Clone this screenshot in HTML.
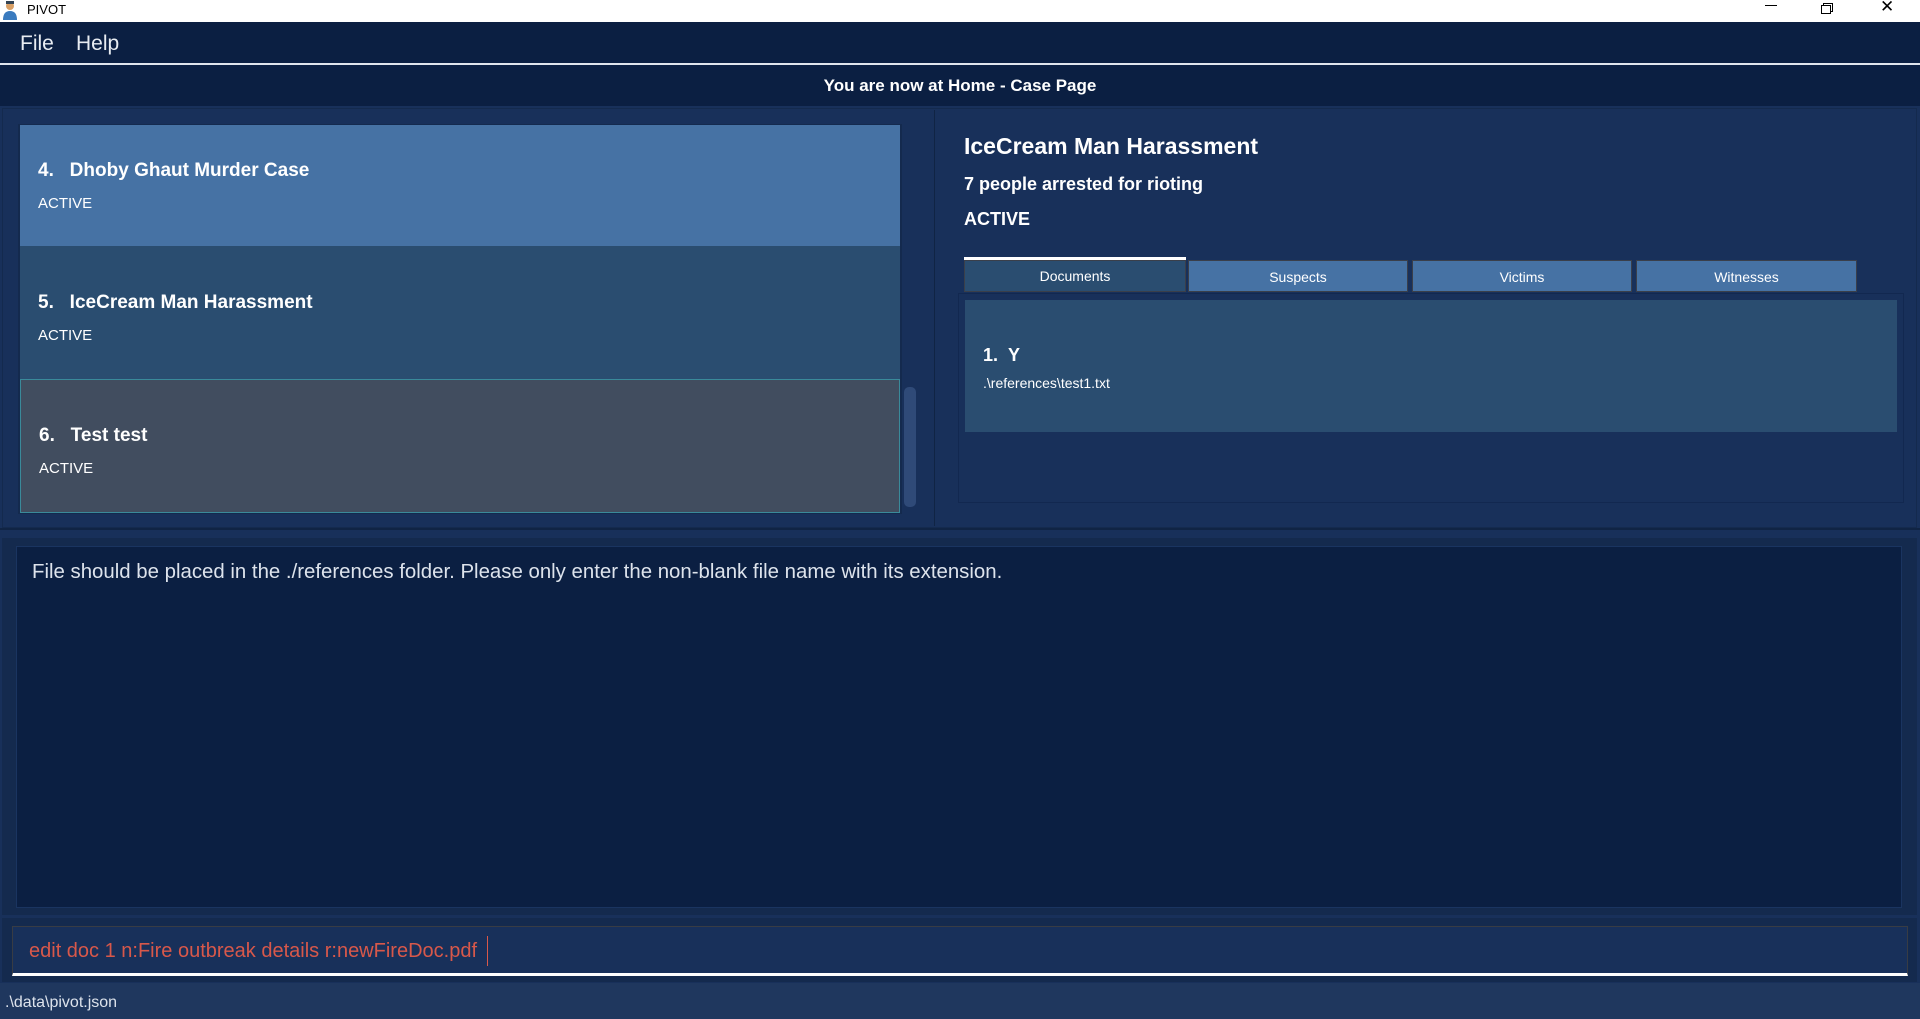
<!DOCTYPE html>
<html><head><meta charset="utf-8"><style>
*{margin:0;padding:0;box-sizing:border-box}
body{width:1920px;height:1019px;overflow:hidden;background:#18305a;font-family:"Liberation Sans",sans-serif;position:relative;color:#fff}
.a{position:absolute}
</style></head><body>
<div class="a" style="left:0;top:0;width:1920px;height:22px;background:#fff"></div>
<div class="a" style="left:2px;top:1px;width:16px;height:19px">
<svg width="16" height="19"><circle cx="8" cy="5" r="4" fill="#d9a066"/><rect x="4" y="0" width="8" height="3" fill="#345"/><path d="M1 19 Q1 10 8 10 Q15 10 15 19Z" fill="#3a7bbf"/></svg></div>
<div class="a" style="left:27px;top:2px;font-size:13px;color:#000">PIVOT</div>
<div class="a" style="left:1765px;top:5px;width:12px;height:1px;background:#000"></div>
<div class="a" style="left:1823px;top:3px;width:10px;height:9px;border:1px solid #000;background:#fff"></div>
<div class="a" style="left:1821px;top:5px;width:10px;height:9px;border:1px solid #000;background:#fff"></div>
<div class="a" style="left:1880px;top:0px;font-size:17px;color:#000;line-height:14px">✕</div>
<div class="a" style="left:0;top:22px;width:1920px;height:42px;background:#0b1f42"></div>
<div class="a" style="left:20px;top:32px;font-size:21px;color:#e8ecf2">File</div>
<div class="a" style="left:76px;top:32px;font-size:21px;color:#e8ecf2">Help</div>
<div class="a" style="left:0;top:63px;width:1920px;height:2px;background:#dfe4ec"></div>
<div class="a" style="left:0;top:65px;width:1920px;height:41px;background:#0b1f42;text-align:center;font-size:17px;font-weight:bold;line-height:42px">You are now at Home - Case Page</div>
<div class="a" style="left:2px;top:108px;width:1915px;height:420px;background:#18305a;border:1px solid #142a4e"></div>
<div class="a" style="left:934px;top:110px;width:1px;height:416px;background:#102444"></div>
<div class="a" style="left:18px;top:124px;width:884px;height:390px;background:#142a4e"></div>
<div class="a" style="left:20px;top:125px;width:880px;height:121px;background:#4672a4"></div>
<div class="a" style="left:38px;top:160px;font-size:19px;font-weight:bold">4.&nbsp;&nbsp;&nbsp;Dhoby Ghaut Murder Case</div>
<div class="a" style="left:38px;top:195px;font-size:15px">ACTIVE</div>
<div class="a" style="left:20px;top:246px;width:880px;height:133px;background:#2a4d70"></div>
<div class="a" style="left:38px;top:292px;font-size:19px;font-weight:bold">5.&nbsp;&nbsp;&nbsp;IceCream Man Harassment</div>
<div class="a" style="left:38px;top:327px;font-size:15px">ACTIVE</div>
<div class="a" style="left:20px;top:379px;width:880px;height:134px;background:#414d5f;border:1px solid #3a8a9a"></div>
<div class="a" style="left:39px;top:425px;font-size:19px;font-weight:bold">6.&nbsp;&nbsp;&nbsp;Test test</div>
<div class="a" style="left:39px;top:460px;font-size:15px">ACTIVE</div>
<div class="a" style="left:904px;top:387px;width:12px;height:120px;background:#2f4a78;border-radius:5px"></div>
<div class="a" style="left:964px;top:133px;font-size:23px;font-weight:bold">IceCream Man Harassment</div>
<div class="a" style="left:964px;top:174px;font-size:18px;font-weight:bold">7 people arrested for rioting</div>
<div class="a" style="left:964px;top:209px;font-size:18px;font-weight:bold">ACTIVE</div>
<div class="a" style="left:964px;top:257px;width:222px;height:4px;background:#fff"></div>
<div class="a" style="left:964px;top:260px;width:222px;height:32px;background:#2a4d70;border:1px solid #3a3f4a;text-align:center;font-size:14px;line-height:30px">Documents</div>
<div class="a" style="left:1188px;top:260px;width:220px;height:32px;background:#4672a4;border:1px solid #3a3f4a;text-align:center;font-size:14px;line-height:32px">Suspects</div>
<div class="a" style="left:1412px;top:260px;width:220px;height:32px;background:#4672a4;border:1px solid #3a3f4a;text-align:center;font-size:14px;line-height:32px">Victims</div>
<div class="a" style="left:1636px;top:260px;width:221px;height:32px;background:#4672a4;border:1px solid #3a3f4a;text-align:center;font-size:14px;line-height:32px">Witnesses</div>
<div class="a" style="left:958px;top:293px;width:946px;height:210px;border:1px solid #122850"></div>
<div class="a" style="left:965px;top:300px;width:932px;height:132px;background:#2a4d70"></div>
<div class="a" style="left:983px;top:345px;font-size:18px;font-weight:bold">1.&nbsp;&nbsp;Y</div>
<div class="a" style="left:983px;top:375px;font-size:14px">.\references\test1.txt</div>
<div class="a" style="left:0;top:528px;width:1920px;height:2px;background:#102444"></div>
<div class="a" style="left:2px;top:538px;width:1915px;height:377px;background:#142a4e"></div>
<div class="a" style="left:16px;top:546px;width:1886px;height:362px;background:#0b1f42;border:1px solid #1a3460"></div>
<div class="a" style="left:32px;top:561px;font-size:20.4px;color:#dde3ec">File should be placed in the ./references folder. Please only enter the non-blank file name with its extension.</div>
<div class="a" style="left:2px;top:918px;width:1915px;height:64px;background:#142a4e"></div>
<div class="a" style="left:12px;top:926px;width:1896px;height:50px;background:#18305a;border:1px solid #383c44;border-bottom:3px solid #fff"></div>
<div class="a" style="left:29px;top:940px;font-size:20px;color:#d8584a">edit doc 1 n:Fire outbreak details r:newFireDoc.pdf</div>
<div class="a" style="left:487px;top:936px;width:1px;height:30px;background:#d8584a"></div>
<div class="a" style="left:0;top:983px;width:1920px;height:36px;background:#1f375e"></div>
<div class="a" style="left:5px;top:994px;font-size:16px;color:#dde3ec">.\data\pivot.json</div>
</body></html>
